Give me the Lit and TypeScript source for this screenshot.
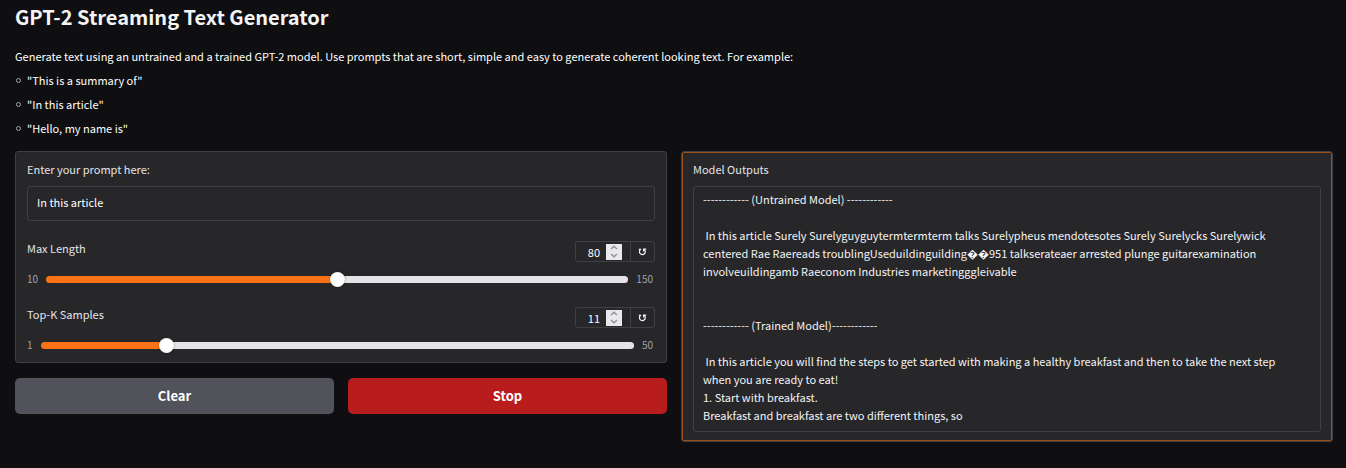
import { LitElement, html, css } from "lit";
import { customElement, property, state } from "lit/decorators.js";

@customElement("range-field")
class RangeField extends LitElement {
  @property() label = "";
  @property({ type: Number }) min = 0;
  @property({ type: Number }) max = 100;
  @property({ type: Number }) initial = 0;
  @state() value = 0;

  static styles = css`
    :host { display: block; }
    * { box-sizing: border-box; }
    .head { display: flex; justify-content: space-between; align-items: flex-start; }
    .label { line-height: 14px; color: #e4e4e7; }
    .group {
      display: flex; height: 21px; border: 1px solid #3f3f46; border-radius: 3px; overflow: hidden;
    }
    .stepper { display: flex; align-items: center; padding: 0 8px 0 12px; gap: 6px; }
    .number {
      min-width: 11px; field-sizing: content; padding: 0; border: 0; outline: 0; background: none; color: #fff;
      font: inherit; font-size: 11px; line-height: 16px; text-align: right; appearance: textfield;
    }
    .number::-webkit-inner-spin-button { appearance: none; display: none; }
    .spin { display: flex; flex-direction: column; width: 16px; height: 16px; background: #e9e9ed; }
    .step { flex: 1; display: flex; align-items: center; justify-content: center; padding: 0; border: 0; background: none; }
    .step svg { width: 8px; height: 5px; fill: none; stroke: #8f8f9d; stroke-width: 1.4; }
    .reset {
      display: flex; align-items: center; justify-content: center; width: 24px; padding: 0;
      border: 0; border-left: 1px solid #3f3f46; background: none; color: #f4f4f5;
    }
    .reset svg { width: 9px; height: 9px; fill: none; stroke: currentColor; stroke-width: 1.2; }
    .row { display: flex; align-items: center; gap: 8px; margin-top: 9px; padding-right: 2px; height: 16px; }
    .bound { font-size: 10px; line-height: 16px; color: #a1a1aa; }
    .slider {
      flex: 1; min-width: 0; height: 16px; margin: 0; background: none; appearance: none;
    }
    .slider::-webkit-slider-runnable-track {
      height: 7px; border-radius: 4px;
      background: linear-gradient(to right, #f97316 var(--fill), #e4e4e7 var(--fill));
    }
    .slider::-webkit-slider-thumb {
      appearance: none; width: 15px; height: 15px; margin-top: -4px; border-radius: 50%;
      background: #fff; box-shadow: 0 0 2px rgba(0, 0, 0, 0.5);
    }
  `;

  connectedCallback() {
    super.connectedCallback();
    this.value = this.initial;
  }

  set(v: number) {
    this.value = Math.min(this.max, Math.max(this.min, v));
  }

  render() {
    const pct = ((this.value - this.min) / (this.max - this.min)) * 100;
    return html`
      <div class="head">
        <label class="label" for="number">${this.label}</label>
        <div class="group">
          <div class="stepper">
            <input class="number" id="number" type="number" min=${this.min} max=${this.max} .value=${String(this.value)}
              @change=${(e: Event) => this.set(+(e.target as HTMLInputElement).value)} />
            <div class="spin">
              <button class="step" aria-label="Increase" @click=${() => this.set(this.value + 1)}>
                <svg viewBox="0 0 8 5"><path d="M1 4 4 1.2 7 4" /></svg>
              </button>
              <button class="step" aria-label="Decrease" @click=${() => this.set(this.value - 1)}>
                <svg viewBox="0 0 8 5"><path d="M1 1 4 3.8 7 1" /></svg>
              </button>
            </div>
          </div>
          <button class="reset" aria-label="Reset to default" @click=${() => this.set(this.initial)}>
            <svg viewBox="0 0 9 9"><path d="M.8 2.4H3.2M2.6 2.4A2.9 2.9 0 1 0 6.4 2.6M8.2 2.2H5.6V4.6" /></svg>
          </button>
        </div>
      </div>
      <div class="row">
        <span class="bound">${this.min}</span>
        <input class="slider" type="range" aria-label=${this.label} min=${this.min} max=${this.max} .value=${String(this.value)}
          style="--fill: ${pct}%" @input=${(e: Event) => this.set(+(e.target as HTMLInputElement).value)} />
        <span class="bound">${this.max}</span>
      </div>
    `;
  }
}

const OUTPUT = `------------ (Untrained Model) ------------

 In this article Surely Surelyguyguytermtermterm talks Surelypheus mendotesotes Surely Surelycks Surelywick centered Rae Raereads troublingUseduildinguilding\uFFFD\uFFFD951 talkserateaer arrested plunge guitarexamination involveuildingamb Raeconom Industries marketingggleivable


------------ (Trained Model)------------

 In this article you will find the steps to get started with making a healthy breakfast and then to take the next step when you are ready to eat!
1. Start with breakfast.
Breakfast and breakfast are two different things, so`;

@customElement("app-root")
class AppRoot extends LitElement {
  @state() prompt = "In this article";
  @state() output = OUTPUT;

  static styles = css`
    :host {
      display: block; box-sizing: border-box; min-height: 100vh; padding: 5px 13px 26px 15px;
      background: #0f0f11; color: #f4f4f5;
      font-family: "Noto Sans CJK SC", "Open Sans", sans-serif; font-size: 11px; line-height: 24px;
    }
    * { box-sizing: border-box; }
    .title { margin: 0 0 15px; font-size: 20px; line-height: 24px; font-weight: 600; }
    .intro { margin: 0; color: #fff; }
    .examples { margin: 0 0 11px; padding: 0 0 0 1px; list-style: none; color: #fff; }
    .examples li { display: flex; align-items: center; gap: 6px; }
    .examples li::before { content: ""; box-sizing: border-box; width: 5px; height: 5px; border: 1px solid #a1a1aa; border-radius: 50%; }
    .columns { display: grid; grid-template-columns: 1fr 1fr; gap: 14px; align-items: start; }
    .panel { background: #27272a; border: 1px solid #3f3f46; border-radius: 3px; }
    .field { padding: 9px 11px; }
    .label { display: block; margin-bottom: 9px; line-height: 16px; color: #e4e4e7; }
    .box {
      display: block; width: 100%; border: 1px solid #3f3f46; border-radius: 3px; outline: 0;
      background: #27272a; color: #f4f4f5; font: inherit; line-height: 18px;
    }
    .prompt { height: 35px; padding: 0 9px 3px; color: #fff; }
    .result { padding: 3px 20px 7px 9px; resize: none; overflow: hidden; }
    .live { box-shadow: inset 0 0 0 1px #9a4f1b; }
    .ranges { display: grid; gap: 20px; padding: 11px 11px 9px; }
    .actions { display: grid; grid-template-columns: 1fr 1fr; gap: 14px; margin-top: 15px; }
    .button {
      height: 36px; padding: 0; border: 0; border-radius: 5px; color: #fff;
      font: inherit; font-size: 13px; font-weight: 600;
    }
    .clear { background: #52525b; }
    .stop { background: #b91c1c; }
  `;

  render() {
    return html`
      <h1 class="title">GPT-2 Streaming Text Generator</h1>
      <p class="intro">
        Generate text using an untrained and a trained GPT-2 model. Use prompts that are short, simple and easy to generate coherent looking text. For example:
      </p>
      <ul class="examples">
        <li>"This is a summary of"</li>
        <li>"In this article"</li>
        <li>"Hello, my name is"</li>
      </ul>
      <div class="columns">
        <div>
          <div class="panel">
            <div class="field">
              <label class="label" for="prompt">Enter your prompt here:</label>
              <input class="box prompt" id="prompt" .value=${this.prompt}
                @input=${(e: Event) => (this.prompt = (e.target as HTMLInputElement).value)} />
            </div>
            <div class="ranges">
              <range-field label="Max Length" min="10" max="150" initial="80"></range-field>
              <range-field label="Top-K Samples" min="1" max="50" initial="11"></range-field>
            </div>
          </div>
          <div class="actions">
            <button class="button clear" @click=${() => { this.prompt = ""; this.output = ""; }}>Clear</button>
            <button class="button stop">Stop</button>
          </div>
        </div>
        <div class="panel live">
          <div class="field">
            <label class="label" for="result">Model Outputs</label>
            <textarea class="box result" id="result" rows="13" readonly .value=${this.output}></textarea>
          </div>
        </div>
      </div>
    `;
  }
}
